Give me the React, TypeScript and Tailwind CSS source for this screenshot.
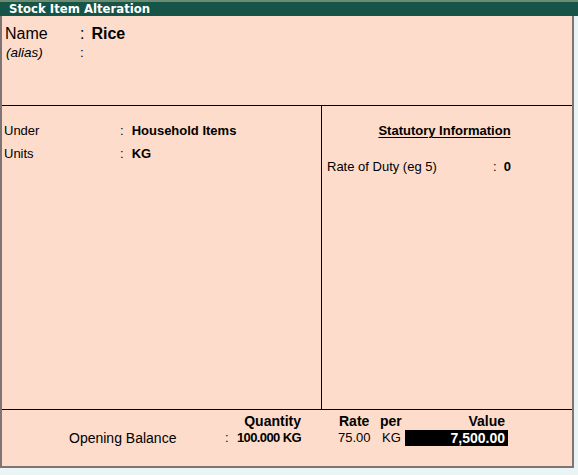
const rows = [
  { label: 'Under', value: 'Household Items' },
  { label: 'Units', value: 'KG' },
]

export default function App() {
  return (
    <div
      className="flex h-[475px] w-[578px] flex-col bg-[#ebf4f5] text-black"
      style={{ fontFamily: '"Liberation Sans", Arial, sans-serif' }}
    >
      <div className="h-[2px] bg-[#6d8b70]" />
      <div
        className="h-[14px] bg-[#165447] pl-[9px] text-[11.7px] font-bold leading-[14px] text-white"
        style={{ fontFamily: '"DejaVu Sans", Verdana, sans-serif' }}
      >
        Stock Item Alteration
      </div>

      <div className="flex h-[452px] w-[574px] flex-col border-b-2 border-l-2 border-r-2 border-[#7f7373] bg-[#fddccb]">
        {/* name block */}
        <div className="h-[90px] border-b border-black pl-[3px] pt-[8px]">
          <div className="flex text-[16px] leading-[20px]">
            <span className="w-[75px]">Name</span>
            <span>:</span>
            <span className="ml-[7px] font-bold">Rice</span>
          </div>
          <div className="flex text-[13.5px] italic leading-[18px]">
            <span className="w-[75px] pl-[1px]">(alias)</span>
            <span className="not-italic">:</span>
          </div>
        </div>

        {/* middle */}
        <div className="flex h-[304px] border-b border-black">
          <div className="w-[320px] border-r border-black pl-[2px] pt-[13px] text-[13px] leading-[23px]">
            {rows.map((row) => (
              <div key={row.label} className="flex">
                <span className="w-[116px]">{row.label}</span>
                <span>:</span>
                <span className="ml-[8px] font-bold">{row.value}</span>
              </div>
            ))}
          </div>
          <div className="flex-1 pl-[5px] pt-[17px] text-[13px] leading-[16px]">
            <div className="pr-[10px] text-center">
              <span className="font-bold underline decoration-1 underline-offset-[2px]">
                Statutory Information
              </span>
            </div>
            <div className="mt-[20px] flex">
              <span className="w-[166px]">Rate of Duty (eg 5)</span>
              <span>:</span>
              <span className="ml-[7px] font-bold">0</span>
            </div>
          </div>
        </div>

        {/* opening balance */}
        <div className="flex-1 pl-[65px] pt-[3px]">
          <div className="flex text-[14px] font-bold leading-[17px]">
            <span className="w-[166px]" />
            <span className="w-[68px] text-right">Quantity</span>
            <span className="ml-[38px] w-[41px]">Rate</span>
            <span className="w-[25px]">per</span>
            <span className="w-[103px] pr-[3px] text-right">Value</span>
          </div>
          <div className="flex items-center leading-[16px]">
            <span className="w-[158px] pl-[2px] text-[14px]">Opening Balance</span>
            <span className="w-[8px] text-[13px]">:</span>
            <span className="w-[68px] text-right text-[13px] font-bold tracking-[-0.6px]">100.000 KG</span>
            <span className="ml-[37px] w-[44px] text-[13px]">75.00</span>
            <span className="w-[23px] text-[13px]">KG</span>
            <span className="h-[16px] w-[103px] bg-black pr-[3px] text-right text-[14px] font-bold text-white">
              7,500.00
            </span>
          </div>
        </div>
      </div>
    </div>
  )
}
